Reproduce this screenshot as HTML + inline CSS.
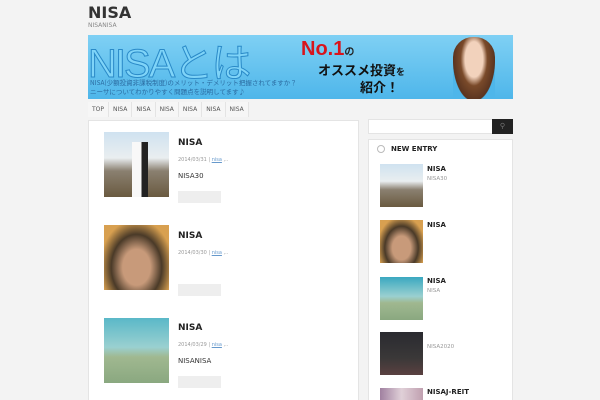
<!DOCTYPE html>
<html style="height:400px;overflow:hidden"><head><meta charset="utf-8"><style>
*{margin:0;padding:0;box-sizing:border-box}
body{width:600px;height:400px;overflow:hidden;background:#f3f3f3;font-family:"DejaVu Sans","Liberation Sans","Noto Sans CJK JP",sans-serif;position:relative;color:#333}
.a{position:absolute}
.h1{left:88px;top:3px;font-size:16px;font-weight:bold;color:#333}
.sub{left:88px;top:22px;font-size:6px;color:#888}
.ban{left:88px;top:35px;width:425px;height:64px;background:linear-gradient(180deg,#7fd0f4,#4eb6ea);overflow:hidden}
.nav{top:102px;left:88px;font-size:6px;color:#555;display:flex}
.nav span{padding:4px 4px;border-right:1px solid #e4e4e4;background:#f6f6f6;margin-right:0}
.box{background:#fff;border:1px solid #e4e4e4}
.t{font-weight:bold;font-size:9px;color:#222}
.d{font-size:5px;color:#999}
.d u{color:#69c}
.ex{font-size:7px;color:#333}
.btn{width:43px;height:12px;background:#eee}
.st{font-weight:bold;font-size:7px;color:#222}
.ss{font-size:5.5px;color:#999}
</style></head><body>
<div class="a h1">NISA</div>
<div class="a sub">NISANISA</div>
<div class="a ban">
 <div class="a" style="left:0;top:-4px;font-size:40px;color:#7fd4f8;-webkit-text-stroke:1px #2a8ac8;font-family:'Liberation Sans','Noto Sans CJK JP',sans-serif;letter-spacing:-2px">NISAとは</div>
 <div class="a" style="left:2px;top:43px;font-size:6.5px;color:#2a6aa0;line-height:9px;font-family:'Noto Sans CJK JP',sans-serif">NISA(少額投資非課税制度)のメリット・デメリット把握されてますか？<br>ニーサについてわかりやすく問題点を説明してます♪</div>
 <div class="a" style="left:213px;top:3px;font-size:20px;font-weight:bold;color:#d8141c;font-family:'Liberation Sans',sans-serif">No.1<span style="font-size:10px;color:#222">の</span></div>
 <div class="a" style="left:230px;top:25px;font-size:13px;font-weight:bold;color:#111;font-family:'Noto Sans CJK JP',sans-serif">オススメ投資<span style="font-size:9px">を</span></div>
 <div class="a" style="left:272px;top:42px;font-size:13px;font-weight:bold;color:#111;font-family:'Noto Sans CJK JP',sans-serif">紹介！</div>
 <div class="a" style="left:365px;top:2px;width:42px;height:64px;border-radius:20px 20px 4px 4px;background:radial-gradient(ellipse at 50% 35%,#f2d2bc 0 30%,#7a4a2a 45%,#5a3420 70%,#4eb6ea 72%)"></div>
</div>
<div class="a nav"><span>TOP</span><span>NISA</span><span>NISA</span><span>NISA</span><span>NISA</span><span>NISA</span><span>NISA</span></div>

<div class="a box" style="left:88px;top:120px;width:271px;height:280px;border-bottom:none"></div>
<div class="a" style="left:104px;top:132px;width:65px;height:65px;background:linear-gradient(180deg,#cfe2f0 0,#e9eef0 40%,#8a8070 60%,#6a5a40 100%)"><div class="a" style="left:28px;top:10px;width:16px;height:55px;background:linear-gradient(90deg,#f8f8f8 60%,#222 60%)"></div></div>
<div class="a t" style="left:178px;top:138px">NISA</div>
<div class="a d" style="left:178px;top:157px">2014/03/31 | <u>nisa</u> ,..</div>
<div class="a ex" style="left:178px;top:172px">NISA30</div>
<div class="a btn" style="left:178px;top:191px"></div>

<div class="a" style="left:104px;top:225px;width:65px;height:65px;background:radial-gradient(ellipse at 50% 65%,#c89a7a 0 30%,#4a3a28 55%,#d8a050 80%)"></div>
<div class="a t" style="left:178px;top:231px">NISA</div>
<div class="a d" style="left:178px;top:250px">2014/03/30 | <u>nisa</u> ,..</div>
<div class="a btn" style="left:178px;top:284px"></div>

<div class="a" style="left:104px;top:318px;width:65px;height:65px;background:linear-gradient(180deg,#5ab8c8,#9ad0d0 45%,#a0b890 60%,#8aa880)"></div>
<div class="a t" style="left:178px;top:323px">NISA</div>
<div class="a d" style="left:178px;top:342px">2014/03/29 | <u>nisa</u> ,..</div>
<div class="a ex" style="left:178px;top:357px">NISANISA</div>
<div class="a btn" style="left:178px;top:376px"></div>

<div class="a" style="left:368px;top:119px;width:125px;height:15px;background:#fff;border:1px solid #e4e4e4"></div>
<div class="a" style="left:492px;top:119px;width:21px;height:15px;background:#222;color:#777;font-size:7px;text-align:center;line-height:15px">⚲</div>
<div class="a box" style="left:368px;top:139px;width:145px;height:261px;border-bottom:none"></div>
<div class="a" style="left:377px;top:145px;width:8px;height:8px;border:1px solid #bbb;border-radius:50%"></div>
<div class="a st" style="left:391px;top:145px">NEW ENTRY</div>
<div class="a" style="left:380px;top:164px;width:43px;height:43px;background:linear-gradient(180deg,#cfe2f0,#e9eef0 40%,#8a8070 60%,#6a5a40)"></div>
<div class="a st" style="left:427px;top:165px">NISA</div><div class="a ss" style="left:427px;top:176px">NISA30</div>
<div class="a" style="left:380px;top:220px;width:43px;height:43px;background:radial-gradient(ellipse at 50% 65%,#c89a7a 0 30%,#4a3a28 55%,#d8a050 80%)"></div>
<div class="a st" style="left:427px;top:221px">NISA</div>
<div class="a" style="left:380px;top:277px;width:43px;height:43px;background:linear-gradient(180deg,#3aa8c0,#9ad0d0 45%,#a0b890 60%,#8aa880)"></div>
<div class="a st" style="left:427px;top:277px">NISA</div><div class="a ss" style="left:427px;top:288px">NISA</div>
<div class="a" style="left:380px;top:332px;width:43px;height:43px;background:linear-gradient(180deg,#2a2a30,#3a3838 60%,#5a4040)"></div>
<div class="a ss" style="left:427px;top:344px">NISA2020</div>
<div class="a" style="left:380px;top:388px;width:43px;height:12px;background:linear-gradient(90deg,#a080a0,#e0d0d8,#c0a0b0)"></div>
<div class="a st" style="left:427px;top:388px">NISAJ-REIT</div>
</body></html>
